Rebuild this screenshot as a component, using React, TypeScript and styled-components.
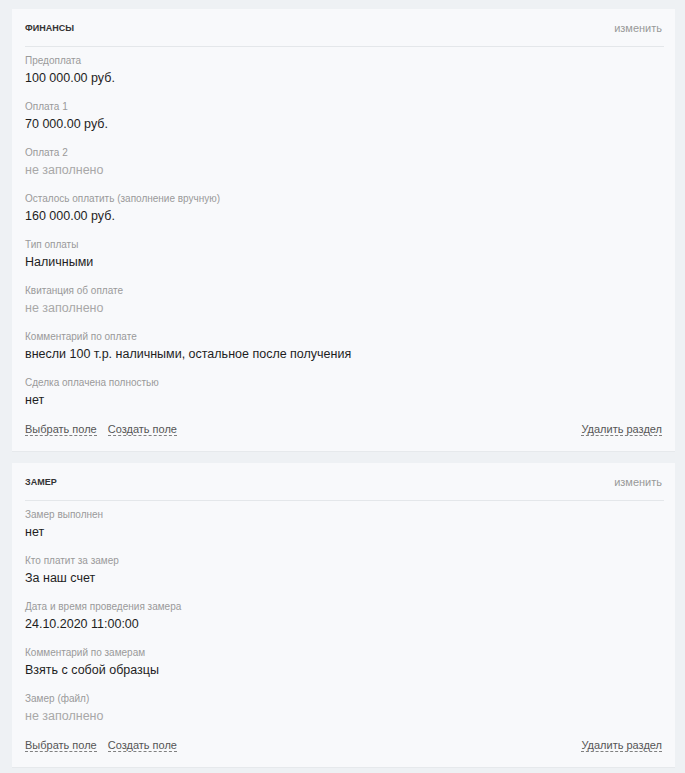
import React from "react";
import styled, { createGlobalStyle } from "styled-components";

const GlobalStyle = createGlobalStyle`
  body {
    margin: 0;
    background: #eef1f4;
    font-family: "Liberation Sans", Arial, sans-serif;
  }
`;

const Page = styled.div`
  display: flex;
  flex-direction: column;
  gap: 12px;
  padding: 9px 10px 6px 12px;
`;

const Card = styled.section`
  background: #f8f9fb;
  padding: 0 11px 14px 13px;
  box-shadow: 0 1px 0 #e6e9ec;
`;

const Header = styled.div`
  display: flex;
  justify-content: space-between;
  align-items: center;
  height: 36px;
  padding-top: 1px;
  border-bottom: 1px solid #e4e7ea;
  margin-bottom: 7px;
`;

const Title = styled.div`
  font-size: 9px;
  font-weight: bold;
  color: #333;
  text-transform: uppercase;
`;

const EditLink = styled.a`
  font-size: 11px;
  color: #999;
  margin-right: 2px;
  cursor: pointer;
`;

const Field = styled.div`
  display: flex;
  flex-direction: column;
  margin-bottom: 13px;
`;

const Label = styled.div`
  font-size: 10px;
  line-height: 14px;
  color: #9a9a9a;
`;

const Value = styled.div<{ $empty?: boolean }>`
  font-size: 12.5px;
  line-height: 18px;
  padding-top: 1px;
  color: ${(p) => (p.$empty ? "#a8a8a8" : "#1e1e1e")};
`;

const Footer = styled.div`
  display: flex;
  align-items: center;
  gap: 11px;
  height: 15px;
  margin-right: 2px;
`;

const DashedLink = styled.a<{ $right?: boolean }>`
  font-size: 11px;
  color: #555;
  border-bottom: 1px dashed #808080;
  line-height: 12px;
  cursor: pointer;
  margin-left: ${(p) => (p.$right ? "auto" : "0")};
`;

type Item = { label: string; value?: string };

const finance: Item[] = [
  { label: "Предоплата", value: "100 000.00 руб." },
  { label: "Оплата 1", value: "70 000.00 руб." },
  { label: "Оплата 2" },
  { label: "Осталось оплатить (заполнение вручную)", value: "160 000.00 руб." },
  { label: "Тип оплаты", value: "Наличными" },
  { label: "Квитанция об оплате" },
  { label: "Комментарий по оплате", value: "внесли 100 т.р. наличными, остальное после получения" },
  { label: "Сделка оплачена полностью", value: "нет" },
];

const measure: Item[] = [
  { label: "Замер выполнен", value: "нет" },
  { label: "Кто платит за замер", value: "За наш счет" },
  { label: "Дата и время проведения замера", value: "24.10.2020 11:00:00" },
  { label: "Комментарий по замерам", value: "Взять с собой образцы" },
  { label: "Замер (файл)" },
];

const Section = ({ title, items }: { title: string; items: Item[] }) => (
  <Card>
    <Header>
      <Title>{title}</Title>
      <EditLink>изменить</EditLink>
    </Header>
    {items.map((it) => (
      <Field key={it.label}>
        <Label>{it.label}</Label>
        <Value $empty={!it.value}>{it.value ?? "не заполнено"}</Value>
      </Field>
    ))}
    <Footer>
      <DashedLink>Выбрать поле</DashedLink>
      <DashedLink>Создать поле</DashedLink>
      <DashedLink $right>Удалить раздел</DashedLink>
    </Footer>
  </Card>
);

export default function App() {
  return (
    <>
      <GlobalStyle />
      <Page>
        <Section title="Финансы" items={finance} />
        <Section title="Замер" items={measure} />
      </Page>
    </>
  );
}
